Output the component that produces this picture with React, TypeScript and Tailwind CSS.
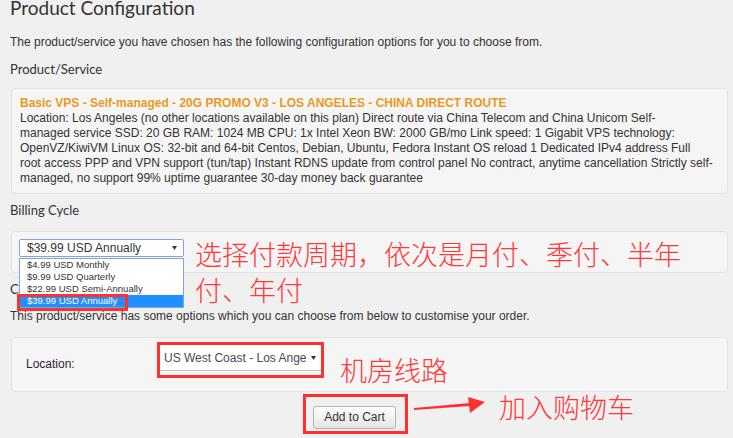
import React from "react";

const labelFont = "font-['Lato',sans-serif] text-[13px] leading-[16px] text-[#333]";
const noteFont =
  "font-['Noto_Sans_CJK_SC','Noto_Sans',sans-serif] font-light text-[27px] leading-[36px] text-[#ff3838] whitespace-nowrap";

const billingOptions = [
  "$4.99 USD Monthly",
  "$9.99 USD Quarterly",
  "$22.99 USD Semi-Annually",
  "$39.99 USD Annually",
];

const Caret: React.FC = () => (
  <svg width="5" height="4" viewBox="0 0 5 4" className="shrink-0">
    <path d="M0 0 L5 0 L2.5 4 Z" fill="#333" />
  </svg>
);

const App: React.FC = () => {
  return (
    <div className="w-[733px] h-[438px] overflow-hidden bg-[#f0f0f0] text-[#333] font-['Liberation_Sans',Arial,sans-serif] text-[12px]">
      <div className="pl-[10px]">
        <h1 className="-mt-[5px] font-['Lato',sans-serif] text-[19px] leading-[26px] text-[#333]">
          Product Configuration
        </h1>
        <p className="mt-[14px] leading-[14px]">
          The product/service you have chosen has the following configuration options for you to choose from.
        </p>
        <h2 className={`mt-[12px] ${labelFont}`}>Product/Service</h2>

        {/* product box */}
        <div className="mt-[11px] ml-px w-[717px] rounded-[4px] border border-[#e3e3e3] bg-[#f5f5f5] px-[8px] py-[7px] leading-[15px]">
          <div className="font-bold text-[#e99a23]">
            Basic VPS - Self-managed - 20G PROMO V3 - LOS ANGELES - CHINA DIRECT ROUTE
          </div>
          <div className="whitespace-nowrap">
            Location: Los Angeles (no other locations available on this plan) Direct route via China Telecom and China Unicom Self-
            <br />
            managed service SSD: 20 GB RAM: 1024 MB CPU: 1x Intel Xeon BW: 2000 GB/mo Link speed: 1 Gigabit VPS technology:
            <br />
            OpenVZ/KiwiVM Linux OS: 32-bit and 64-bit Centos, Debian, Ubuntu, Fedora Instant OS reload 1 Dedicated IPv4 address Full
            <br />
            root access PPP and VPN support (tun/tap) Instant RDNS update from control panel No contract, anytime cancellation Strictly self-
            <br />
            managed, no support 99% uptime guarantee 30-day money back guarantee
          </div>
        </div>

        <h2 className={`mt-[8px] ${labelFont}`}>Billing Cycle</h2>

        {/* billing box */}
        <div className="relative mt-[13px] ml-px w-[717px] h-[42px] rounded-[4px] border border-[#e3e3e3] bg-[#f5f5f5] pl-[7px] pt-[7px]">
          <div className="flex h-[18px] w-[165px] items-center justify-between rounded-[2px] border border-[#7fa6d6] bg-white pl-[7px] pr-[6px] leading-[16px]">
            <span>$39.99 USD Annually</span>
            <Caret />
          </div>
          <ul className="absolute left-[7px] top-[26px] z-10 w-[165px] border border-[#7fa6d6] bg-white text-[9.5px] leading-[12px]">
            {billingOptions.map((opt, i) => (
              <li
                key={opt}
                className={`pl-[7px] ${i === billingOptions.length - 1 ? "relative bg-[#1e90ff] text-white" : "text-[#333]"}`}
              >
                {opt}
                {i === billingOptions.length - 1 && (
                  <span className="absolute -left-[3px] -top-[1px] h-[17px] w-[111px] border-[3px] border-[#ff3030]" />
                )}
              </li>
            ))}
          </ul>
          <div className={`absolute left-[183px] top-[4px] z-10 ${noteFont}`}>
            <div>选择付款周期，依次是月付、季付、半年</div>
            <div>付、年付</div>
          </div>
        </div>

        <h2 className={`mt-[8px] ${labelFont}`}>Configurable Options</h2>
        <p className="mt-[12px] leading-[14px]">
          This product/service has some options which you can choose from below to customise your order.
        </p>

        {/* location box */}
        <div className="relative mt-[14px] ml-px flex w-[717px] items-start rounded-[4px] border border-[#e3e3e3] bg-[#f5f5f5] pt-[6px] pb-[20px] pl-[14px]">
          <label className="mt-[13px] w-[133px] leading-[14px] text-[#2e1f38]">Location:</label>
          <div className="relative">
            <div className="flex h-[27px] w-[162px] items-center border-y border-[#c8c8c8] bg-white pl-[5px] pr-[5px] text-[#4a4a55]">
              <span className="w-[143px] overflow-hidden whitespace-nowrap">US West Coast - Los Angeles</span>
              <span className="ml-auto">
                <Caret />
              </span>
            </div>
            <span className="absolute -left-[2px] -top-[2px] h-[36px] w-[167px] border-[3px] border-[#ff3030]" />
          </div>
          <div className={`absolute left-[328px] top-[14px] ${noteFont}`}>机房线路</div>
        </div>

        {/* add to cart */}
        <div className="mt-[2px] ml-[293px] flex items-start">
          <div className="border-[3px] border-[#ff3030] pt-[9px] pl-[7px] pr-[9px] pb-[2px]">
            <button className="h-[23px] w-[83px] rounded-[3px] border border-[#b5b5b5] bg-gradient-to-b from-white to-[#e4e4e4] text-[12px] leading-[21px] text-[#333]">
              Add to Cart
            </button>
          </div>
          <svg width="76" height="20" viewBox="0 0 76 20" className="ml-[4px] mt-[1px]">
            <polygon points="2,13 58,8 58,11 2,15" fill="#ff3030" />
            <polygon points="56,2 73,7 58,18" fill="#ff3030" />
          </svg>
          <div className={`ml-[11px] -mt-[5px] ${noteFont}`}>加入购物车</div>
        </div>
      </div>
    </div>
  );
};

export default App;
